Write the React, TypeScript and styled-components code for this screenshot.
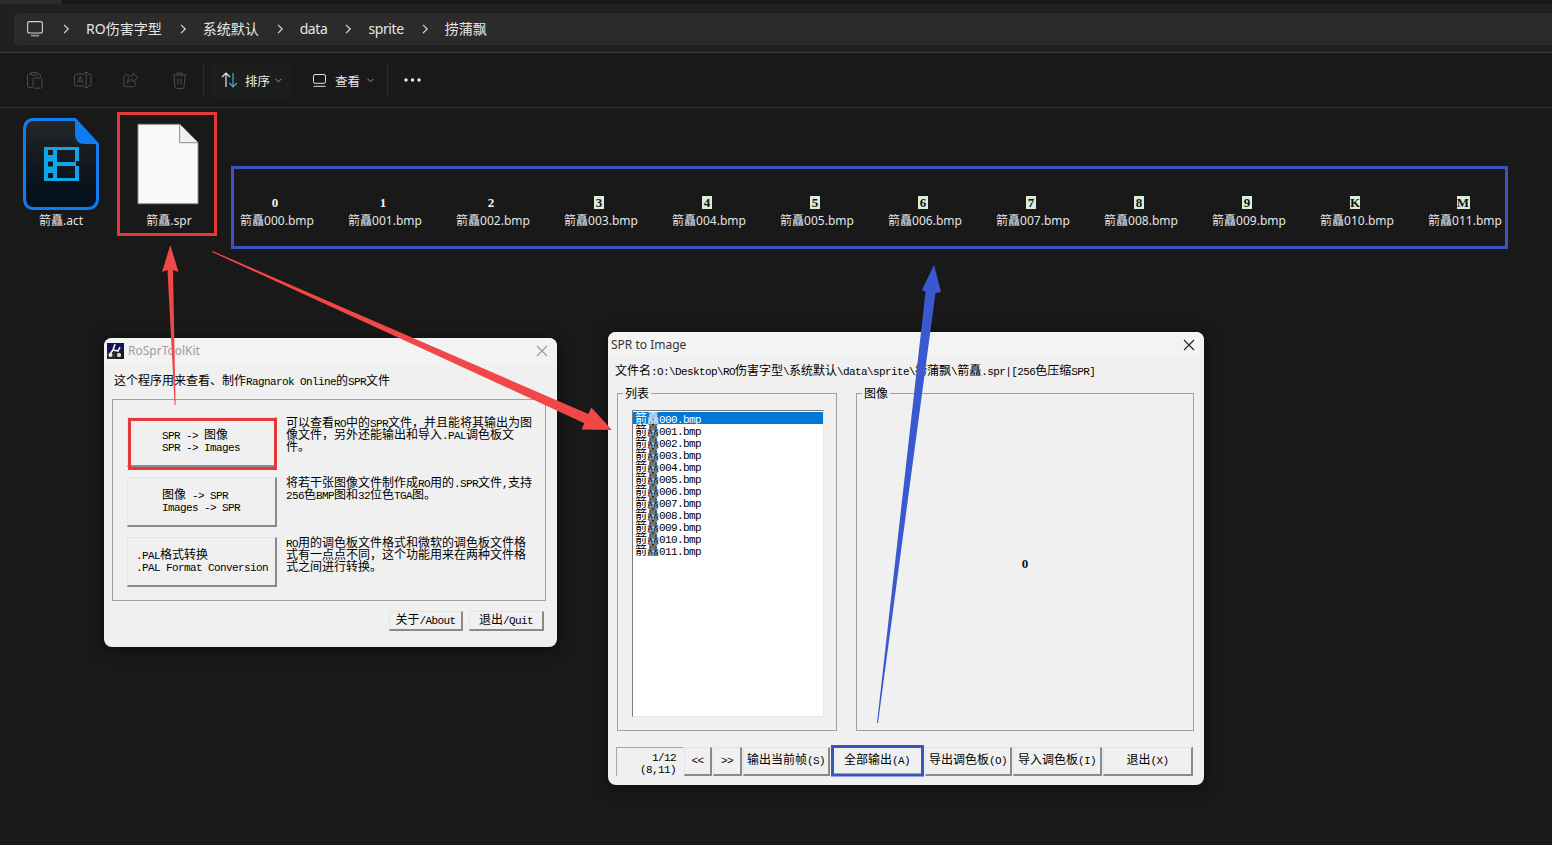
import styled, { createGlobalStyle } from "styled-components";

const GlobalStyle = createGlobalStyle`
    html, body {
        margin: 0;
        padding: 0;
        background: #191919;
    }
    * {
        box-sizing: border-box;
    }
`;

const uiFont = `"Noto Sans", "Noto Sans CJK SC", sans-serif`;
const dlgFont = `"Noto Sans CJK SC", "Liberation Mono", sans-serif`;

const Page = styled.div`
    position: relative;
    width: 1552px;
    height: 845px;
    overflow: hidden;
    background: #191919;
    color: #e8e8e8;
    font-family: ${uiFont};
`;

const TabStrip = styled.div`
    height: 4px;
    background: linear-gradient(to right, #2b2b2b 62px, #171717 62px);
`;

const AddressRow = styled.div`
    height: 49px;
    padding: 9px 0 7px 14px;
    background: #202020;
    border-bottom: 1px solid #3a3a3a;
`;

const Breadcrumb = styled.div`
    display: flex;
    align-items: center;
    gap: 17px;
    height: 32px;
    padding-left: 13px;
    background: #2b2b2b;
    border-radius: 4px 0 0 4px;
    font-size: 14px;
    color: #e6e6e6;
`;

const PcSlot = styled.span`
    display: flex;
    margin-right: 2px;
`;

const Crumb = styled.span`
    line-height: 32px;
    white-space: nowrap;
`;

const CrumbLabel = styled.span<{ $tight?: boolean }>`
    margin-left: 16px;
    letter-spacing: ${(p) => (p.$tight ? "-0.4px" : "0")};
`;

const Toolbar = styled.div`
    display: flex;
    align-items: center;
    height: 55px;
    padding-left: 23px;
    border-bottom: 1px solid #333;
    background: #191919;
`;

const IconSlot = styled.div<{ $last?: boolean }>`
    display: flex;
    align-items: center;
    justify-content: center;
    width: 24px;
    height: 24px;
    margin-right: ${(p) => (p.$last ? 12 : 24)}px;
    color: #4c4c4c;
`;

const Separator = styled.div<{ $end?: boolean }>`
    width: 1px;
    height: 32px;
    background: #2d2d2d;
    margin: 0 ${(p) => (p.$end ? "16px 0 4px" : "7px 0 0")};
`;

const ToolButton = styled.div<{ $hover?: boolean; $w: number }>`
    display: flex;
    align-items: center;
    gap: 7px;
    width: ${(p) => p.$w}px;
    height: 35px;
    padding-left: 10px;
    border-radius: 4px;
    background: ${(p) => (p.$hover ? "#1d1d1d" : "transparent")};
    font-size: 12.5px;
    color: #e6e6e6;
`;

const ViewButton = styled(ToolButton)`
    padding-left: 22px;
    gap: 9px;
`;

const Caret = styled.span`
    display: flex;
    color: #9a9a9a;
    margin-left: -2px;
`;

const FileArea = styled.div`
    display: flex;
    padding: 10px 0 0 7px;
`;

const Tile = styled.div`
    display: flex;
    flex: 0 0 108px;
    flex-direction: column;
    align-items: center;
    justify-content: flex-end;
    height: 111px;
`;

const FileName = styled.div<{ $gap?: number }>`
    margin-top: ${(p) => p.$gap ?? 0}px;
    font-size: 12px;
    line-height: 16px;
    color: #e4e4e4;
    white-space: nowrap;
`;

const Thumb = styled.span<{ $plain?: boolean; $wide?: boolean }>`
    display: inline-flex;
    align-items: center;
    justify-content: center;
    width: ${(p) => (p.$wide ? 13 : 10)}px;
    height: 13px;
    margin: 0 4px 4px 0;
    background: ${(p) => (p.$plain ? "transparent" : "#d6efd6")};
    color: ${(p) => (p.$plain ? "#f4f4f4" : "#111")};
    font: bold 13px/13px "Liberation Serif", serif;
`;

const BlankSvg = styled.svg`
    margin-right: 2px;
`;

const Window = styled.div`
    position: absolute;
    z-index: 2;
    background: #f0f0f0;
    border-radius: 8px;
    box-shadow: 0 2px 14px rgba(0, 0, 0, 0.55);
    color: #000;
    font-family: ${dlgFont};
    font-size: 12px;
    line-height: 12px;
`;

const ToolWindow = styled(Window)`
    left: 104px;
    top: 338px;
    width: 453px;
    height: 309px;
`;

const SprWindow = styled(Window)`
    left: 608px;
    top: 332px;
    width: 596px;
    height: 453px;
`;

const TitleBar = styled.div<{ $dim?: boolean }>`
    display: flex;
    align-items: center;
    gap: 4px;
    height: 26px;
    padding: 0 9px 0 3px;
    border-radius: 8px 8px 0 0;
    background: #f3f3f3;
    font-family: ${uiFont};
    font-size: 12px;
    color: ${(p) => (p.$dim ? "#9c9c9c" : "#333")};
`;

const TitleText = styled.span`
    flex: 1;
`;

const CloseIcon = styled.span<{ $dim?: boolean }>`
    display: flex;
    color: ${(p) => (p.$dim ? "#9a9a9a" : "#222")};
`;

const Intro = styled.div`
    margin: 10px 0 13px 10px;
    height: 12px;
    white-space: nowrap;
`;

const MainGroup = styled.div`
    display: flex;
    flex-direction: column;
    gap: 10px;
    width: 434px;
    height: 202px;
    margin-left: 8px;
    padding: 17px 0 0 14px;
    border: 1px solid #a0a0a0;
`;

const OptionRow = styled.div`
    display: flex;
    gap: 9px;
    height: 50px;
`;

const RaisedButton = styled.div<{ $w?: number }>`
    display: flex;
    flex-direction: column;
    align-items: center;
    justify-content: center;
    flex: 0 0 ${(p) => (p.$w ? `${p.$w}px` : "auto")};
    padding-bottom: 2px;
    background: #f0f0f0;
    border-style: solid;
    border-width: 1px 2px 2px 1px;
    border-color: #e4e4e4 #8a8a8a #8a8a8a #e4e4e4;
    white-space: nowrap;
`;

const OptionButton = styled(RaisedButton)<{ $pad: number }>`
    align-items: flex-start;
    padding-left: ${(p) => p.$pad}px;
    padding-bottom: 4px;
`;

const Description = styled.div`
    margin-top: -1px;
    white-space: nowrap;
`;

const Line = styled.div`
    height: 12px;
`;

const FooterRow = styled.div`
    display: flex;
    justify-content: flex-end;
    gap: 6px;
    margin: 10px 13px 0 0;
    height: 20px;
`;

const PathLine = styled.div`
    margin: 6px 0 17px 7px;
    height: 12px;
    white-space: nowrap;
`;

const Panels = styled.div`
    display: flex;
    gap: 19px;
    margin-left: 9px;
`;

const GroupBox = styled.div<{ $w: number }>`
    position: relative;
    display: flex;
    width: ${(p) => p.$w}px;
    height: 338px;
    border: 1px solid #a0a0a0;
`;

const Legend = styled.span`
    position: absolute;
    top: -7px;
    left: 5px;
    padding: 0 2px;
    background: #f0f0f0;
`;

const ListBox = styled.div`
    width: 192px;
    height: 307px;
    margin: 16px 0 0 14px;
    padding: 1px 0 0 0;
    background: #fff;
    border-style: solid;
    border-width: 1px;
    border-color: #7a7a7a #e8e8e8 #e8e8e8 #7a7a7a;
`;

const ListItem = styled.div<{ $selected?: boolean }>`
    height: 12px;
    line-height: 11px;
    padding-left: 2px;
    background: ${(p) => (p.$selected ? "#0078d7" : "transparent")};
    color: ${(p) => (p.$selected ? "#fff" : "#000")};
    white-space: nowrap;
`;

const Preview = styled.div`
    display: flex;
    flex: 1;
    align-items: center;
    justify-content: center;
`;

const PreviewGlyph = styled.span`
    margin-top: 3px;
    color: #111;
    font: bold 13px/13px "Liberation Serif", serif;
`;

const BottomBar = styled.div`
    display: flex;
    gap: 1px;
    height: 29px;
    margin: 16px 0 0 8px;
`;

const Counter = styled.div`
    width: 67px;
    padding: 2px 7px 0 0;
    text-align: right;
    border-style: solid;
    border-width: 1px 0 0 1px;
    border-color: #a8a8a8;
`;

const LatinRun = styled.span`
    font-family: "Liberation Mono", monospace;
    font-size: 11px;
    letter-spacing: -0.6px;
`;

const Annotations = styled.svg`
    position: absolute;
    left: 0;
    top: 0;
    z-index: 5;
    pointer-events: none;
`;

// dialog font: half width latin next to full width chinese
function Sim({ text }: { text: string }) {
    const parts = text.split(/([\x00-\x7f]+)/).filter(Boolean);
    return (
        <span>
            {parts.map((part, i) =>
                /^[\x00-\x7f]/.test(part) ? (
                    <LatinRun key={i}>{part}</LatinRun>
                ) : (
                    <span key={i}>{part}</span>
                )
            )}
        </span>
    );
}

const Chevron = () => (
    <svg width="8" height="10" viewBox="0 0 8 10" fill="none" stroke="#d8d8d8" strokeWidth="1.2">
        <path d="M2 0.8 L6.2 5 L2 9.2" />
    </svg>
);

const SmallCaret = () => (
    <Caret>
        <svg width="7" height="5" viewBox="0 0 7 5" fill="none" stroke="currentColor" strokeWidth="1">
            <path d="M0.5 0.8 L3.5 3.8 L6.5 0.8" />
        </svg>
    </Caret>
);

const PcIcon = () => (
    <svg width="16" height="16" viewBox="0 0 16 16" fill="none" stroke="#d4d4d4" strokeWidth="1.1">
        <rect x="0.6" y="0.6" width="14.8" height="11.4" rx="2" />
        <path d="M4 14.6 H12" strokeWidth="1.8" stroke="#8f8f8f" />
    </svg>
);

const PasteIcon = () => (
    <svg width="16" height="18" viewBox="0 0 16 18" fill="none" stroke="currentColor" strokeWidth="1">
        <path d="M4 3 H2 Q0.5 3 0.5 4.5 V15 Q0.5 16.5 2 16.5 H5" />
        <path d="M4 1.5 H10 V4 H4 Z" />
        <path d="M11 3 H12 Q13.5 3 13.5 4.5 V6" />
        <rect x="6" y="7" width="9" height="10.2" rx="1.5" />
    </svg>
);

const RenameIcon = () => (
    <svg width="18" height="16" viewBox="0 0 18 16" fill="none" stroke="currentColor" strokeWidth="1">
        <path d="M10.5 2 H2 Q0.5 2 0.5 3.5 V12.5 Q0.5 14 2 14 H10.5" />
        <path d="M14 2 H15.5 Q17 2 17 3.5 V12.5 Q17 14 15.5 14 H14" />
        <path d="M12.2 0.5 V15.5 M10.5 0.5 H14 M10.5 15.5 H14" />
        <path d="M3.5 11 L6.2 4.5 L9 11 M4.6 9 H7.9" />
    </svg>
);

const ShareIcon = () => (
    <svg width="16" height="16" viewBox="0 0 16 16" fill="none" stroke="currentColor" strokeWidth="1">
        <path d="M6.5 3 H2.5 Q0.8 3 0.8 4.7 V13 Q0.8 14.7 2.5 14.7 H10.5 Q12.2 14.7 12.2 13 V10" />
        <path d="M10 1 L15 5.5 L10 10 V7.5 Q6 7.5 4.5 11 Q4.5 4 10 3.5 Z" />
    </svg>
);

const TrashIcon = () => (
    <svg width="15" height="17" viewBox="0 0 15 17" fill="none" stroke="currentColor" strokeWidth="1">
        <path d="M0.5 3 H14.5 M5 3 V1 H10 V3" />
        <path d="M2 3 L3 15 Q3.1 16.4 4.5 16.4 H10.5 Q11.9 16.4 12 15 L13 3" />
        <path d="M6 6.5 V12.5 M9 6.5 V12.5" />
    </svg>
);

const SortIcon = () => (
    <svg width="17" height="16" viewBox="0 0 17 16" fill="none" strokeWidth="1.2">
        <path d="M5 15 V1.2 M1 5 L5 1 L9 5" stroke="#e8e8e8" />
        <path d="M12 1 V14.8 M8.4 11 L12 14.8 L16 11" stroke="#4aa8e0" />
    </svg>
);

const ViewIcon = () => (
    <svg width="13" height="13" viewBox="0 0 13 13" fill="none" stroke="#e0e0e0" strokeWidth="1">
        <rect x="0.5" y="0.5" width="12" height="8.8" rx="1.5" />
        <path d="M0.5 12.3 H12.5" />
    </svg>
);

const MoreIcon = () => (
    <svg width="17" height="4" viewBox="0 0 17 4" fill="#f0f0f0">
        <circle cx="2" cy="2" r="1.7" />
        <circle cx="8.5" cy="2" r="1.7" />
        <circle cx="15" cy="2" r="1.7" />
    </svg>
);

const CloseGlyph = () => (
    <svg width="12" height="12" viewBox="0 0 12 12" fill="none" stroke="currentColor" strokeWidth="1.1">
        <path d="M1 1 L11 11 M11 1 L1 11" />
    </svg>
);

const AppIcon = () => (
    <svg width="17" height="16" viewBox="0 0 17 16">
        <rect width="17" height="16" fill="#14145a" />
        <rect x="9" y="8" width="8" height="8" fill="#1a1a1a" />
        <rect y="9" width="9" height="7" fill="#2a2a2a" />
        <path d="M8 1 L6 7 L3 11 M6 7 L11 8 L13 4" stroke="#f2f2f2" strokeWidth="1.6" fill="none" />
        <circle cx="3.5" cy="12" r="2" fill="#f2f2f2" />
        <circle cx="12" cy="12" r="2.2" fill="#d0d0d0" />
    </svg>
);

const ActIcon = () => (
    <svg width="76" height="92" viewBox="0 0 76 92">
        <defs>
            <linearGradient id="actFill" x1="0" y1="0" x2="0" y2="1">
                <stop offset="0" stopColor="#26282b" />
                <stop offset="0.55" stopColor="#10161d" />
                <stop offset="1" stopColor="#02101e" />
            </linearGradient>
        </defs>
        <path
            d="M11 1.5 H52 L74.5 26 V80 Q74.5 90.5 64 90.5 H11 Q1.5 90.5 1.5 80 V12 Q1.5 1.5 11 1.5 Z"
            fill="url(#actFill)"
            stroke="#0f7df0"
            strokeWidth="3"
        />
        <path d="M52 1.5 L74.5 26 H62 Q52 26 52 16 Z" fill="#0f7df0" />
        <path
            fill="#0ea5ea"
            fillRule="evenodd"
            d="M21 29 H56 V43 H53 V48 H56 V63 H21 Z M25 32 V37 H30 V32 Z M25 43.5 V48.5 H30 V43.5 Z M25 55 V60 H30 V55 Z M34 32 V44 H52 V32 Z M34 48 V60 H52 V48 Z"
        />
    </svg>
);

const BlankIcon = () => (
    <BlankSvg width="62" height="82" viewBox="0 0 64 84">
        <path d="M1 1 H44 L63 20 V83 H1 Z" fill="#fafafa" stroke="#8a8a8a" strokeWidth="1" />
        <path d="M44 1 V20 H63" fill="#f0f0f0" stroke="#8a8a8a" strokeWidth="1" />
    </BlankSvg>
);

const crumbs = ["RO伤害字型", "系统默认", "data", "sprite", "捞蒲飘"];
const thumbs = ["0", "1", "2", "3", "4", "5", "6", "7", "8", "9", "K", "M"];
const pad = (n: number) => String(n).padStart(3, "0");

const options = [
    {
        label: ["SPR -> 图像", "SPR -> Images"],
        left: 34,
        text: ["可以查看RO中的SPR文件，并且能将其输出为图", "像文件，另外还能输出和导入.PAL调色板文", "件。"],
    },
    {
        label: ["图像 -> SPR", "Images -> SPR"],
        left: 34,
        text: ["将若干张图像文件制作成RO用的.SPR文件,支持", "256色BMP图和32位色TGA图。"],
    },
    {
        label: [".PAL格式转换", ".PAL Format Conversion"],
        left: 8,
        text: ["RO用的调色板文件格式和微软的调色板文件格", "式有一点点不同，这个功能用来在两种文件格", "式之间进行转换。"],
    },
];

const bottomButtons = [
    { label: "<<", w: 28 },
    { label: ">>", w: 29 },
    { label: "输出当前帧(S)", w: 87 },
    { label: "全部输出(A)", w: 93 },
    { label: "导出调色板(O)", w: 87 },
    { label: "导入调色板(I)", w: 89 },
    { label: "退出(X)", w: 90 },
];

export default function App() {
    return (
        <Page>
            <GlobalStyle />
            <TabStrip />
            <AddressRow>
                <Breadcrumb>
                    <PcSlot><PcIcon /></PcSlot>
                    {crumbs.map((c) => (
                        <Crumb key={c}>
                            <Chevron />
                            <CrumbLabel $tight={/^[a-z]+$/.test(c)}>{c}</CrumbLabel>
                        </Crumb>
                    ))}
                </Breadcrumb>
            </AddressRow>

            <Toolbar>
                <IconSlot><PasteIcon /></IconSlot>
                <IconSlot><RenameIcon /></IconSlot>
                <IconSlot><ShareIcon /></IconSlot>
                <IconSlot $last><TrashIcon /></IconSlot>
                <Separator />
                <ToolButton $hover $w={80}>
                    <SortIcon />
                    <span>排序</span>
                    <SmallCaret />
                </ToolButton>
                <ViewButton $w={92}>
                    <ViewIcon />
                    <span>查看</span>
                    <SmallCaret />
                </ViewButton>
                <Separator $end />
                <MoreIcon />
            </Toolbar>

            <FileArea>
                <Tile>
                    <ActIcon />
                    <FileName $gap={3}>箭矗.act</FileName>
                </Tile>
                <Tile>
                    <BlankIcon />
                    <FileName $gap={8}>箭矗.spr</FileName>
                </Tile>
                {thumbs.map((t, i) => (
                    <Tile key={t}>
                        <Thumb $plain={i < 3} $wide={t === "M"}>{t}</Thumb>
                        <FileName>箭矗{pad(i)}.bmp</FileName>
                    </Tile>
                ))}
            </FileArea>

            <ToolWindow>
                <TitleBar $dim>
                    <AppIcon />
                    <TitleText>RoSprToolKit</TitleText>
                    <CloseIcon $dim><CloseGlyph /></CloseIcon>
                </TitleBar>
                <Intro>
                    <Sim text="这个程序用来查看、制作Ragnarok Online的SPR文件" />
                </Intro>
                <MainGroup>
                    {options.map((o) => (
                        <OptionRow key={o.label[1]}>
                            <OptionButton $w={150} $pad={o.left}>
                                {o.label.map((l) => (
                                    <Line key={l}><Sim text={l} /></Line>
                                ))}
                            </OptionButton>
                            <Description>
                                {o.text.map((l) => (
                                    <Line key={l}><Sim text={l} /></Line>
                                ))}
                            </Description>
                        </OptionRow>
                    ))}
                </MainGroup>
                <FooterRow>
                    <RaisedButton $w={74}><Sim text="关于/About" /></RaisedButton>
                    <RaisedButton $w={75}><Sim text="退出/Quit" /></RaisedButton>
                </FooterRow>
            </ToolWindow>

            <SprWindow>
                <TitleBar>
                    <TitleText>SPR to Image</TitleText>
                    <CloseIcon><CloseGlyph /></CloseIcon>
                </TitleBar>
                <PathLine>
                    <Sim text={"文件名:O:\\Desktop\\RO伤害字型\\系统默认\\data\\sprite\\捞蒲飘\\箭矗.spr|[256色压缩SPR]"} />
                </PathLine>
                <Panels>
                    <GroupBox $w={220}>
                        <Legend>列表</Legend>
                        <ListBox>
                            {thumbs.map((t, i) => (
                                <ListItem key={t} $selected={i === 0}>
                                    <Sim text={`箭矗${pad(i)}.bmp`} />
                                </ListItem>
                            ))}
                        </ListBox>
                    </GroupBox>
                    <GroupBox $w={338}>
                        <Legend>图像</Legend>
                        <Preview>
                            <PreviewGlyph>0</PreviewGlyph>
                        </Preview>
                    </GroupBox>
                </Panels>
                <BottomBar>
                    <Counter>
                        <Line><Sim text="1/12" /></Line>
                        <Line><Sim text="(8,11)" /></Line>
                    </Counter>
                    {bottomButtons.map((b) => (
                        <RaisedButton key={b.label} $w={b.w}>
                            <Sim text={b.label} />
                        </RaisedButton>
                    ))}
                </BottomBar>
            </SprWindow>

            <Annotations width="1552" height="845" viewBox="0 0 1552 845" fill="none">
                <g stroke="#e5383b" strokeWidth="3">
                    <rect x="118.5" y="113.5" width="97" height="121" />
                    <rect x="129.5" y="419.5" width="146" height="49" />
                </g>
                <g stroke="#3a55c0" strokeWidth="3">
                    <rect x="232.5" y="167.5" width="1274" height="80" />
                    <rect x="832.5" y="746.5" width="90" height="28.5" />
                </g>
                <polygon fill="#f04848" points="174.6,405 167.5,270 162,272 170.3,245 178.5,272 173,270 175.6,405" />
                <polygon fill="#f04848" points="212,252 212.6,251 588.4,414 591.3,407.6 612,430 581.5,429.6 584.4,423.2" />
                <polygon fill="#3a59d0" points="877,723 925.5,292 922,290 934,265 941,292 935.5,293 878,723" />
            </Annotations>
        </Page>
    );
}
